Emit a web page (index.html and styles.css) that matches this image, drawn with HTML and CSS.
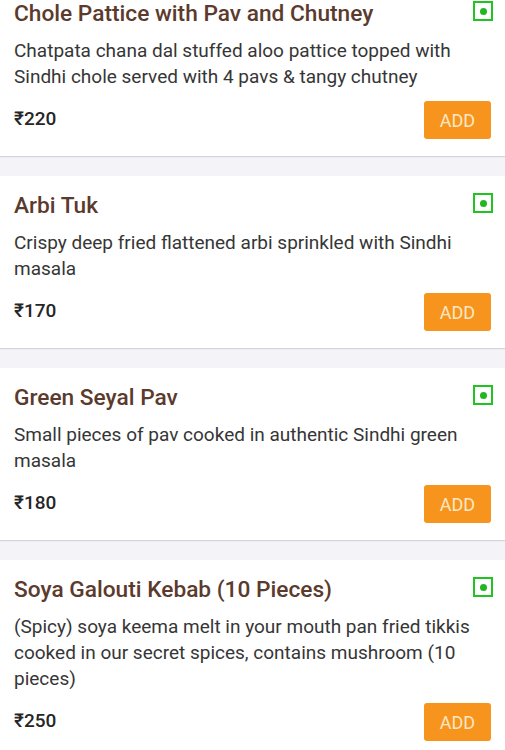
FILE: index.html
```html
<!DOCTYPE html>
<html lang="en">
<head>
<meta charset="utf-8">
<title>Menu</title>
<link rel="stylesheet" href="styles.css">
</head>
<body>
<main class="menu">
  <article class="card card--first">
    <div class="card-head">
      <h2 class="title">Chole Pattice with Pav and Chutney</h2>
      <span class="veg"><span class="veg-dot"></span></span>
    </div>
    <p class="desc">Chatpata chana dal stuffed aloo pattice topped with Sindhi chole served with 4 pavs &amp; tangy chutney</p>
    <div class="card-foot">
      <span class="price">₹220</span>
      <button class="add">ADD</button>
    </div>
  </article>
  <article class="card">
    <div class="card-head">
      <h2 class="title">Arbi Tuk</h2>
      <span class="veg"><span class="veg-dot"></span></span>
    </div>
    <p class="desc">Crispy deep fried flattened arbi sprinkled with Sindhi masala</p>
    <div class="card-foot">
      <span class="price">₹170</span>
      <button class="add">ADD</button>
    </div>
  </article>
  <article class="card">
    <div class="card-head">
      <h2 class="title">Green Seyal Pav</h2>
      <span class="veg"><span class="veg-dot"></span></span>
    </div>
    <p class="desc">Small pieces of pav cooked in authentic Sindhi green masala</p>
    <div class="card-foot">
      <span class="price">₹180</span>
      <button class="add">ADD</button>
    </div>
  </article>
  <article class="card">
    <div class="card-head">
      <h2 class="title">Soya Galouti Kebab (10 Pieces)</h2>
      <span class="veg"><span class="veg-dot"></span></span>
    </div>
    <p class="desc">(Spicy) soya keema melt in your mouth pan fried tikkis cooked in our secret spices, contains mushroom (10 pieces)</p>
    <div class="card-foot">
      <span class="price">₹250</span>
      <button class="add">ADD</button>
    </div>
  </article>
</main>
</body>
</html>
```
FILE: styles.css
```css
html, body {
  margin: 0;
  padding: 0;
}
body {
  background: #f4f3f7;
  font-family: Roboto, "Noto Sans", "Liberation Sans", sans-serif;
}
.menu {
  display: flex;
  flex-direction: column;
  gap: 20px;
}
.card {
  background: #ffffff;
  padding: 16px 14px 17px 14px;
  box-shadow: 0 1px 1px rgba(0, 0, 0, 0.13);
}
.card--first {
  padding-top: 0;
}
.card-head {
  display: flex;
  justify-content: space-between;
  align-items: flex-start;
  gap: 12px;
}
.title {
  margin: 0;
  font-size: 22.7px;
  line-height: 28px;
  font-weight: 500;
  color: #5b3b2d;
}
.veg {
  flex: none;
  width: 20px;
  height: 20px;
  box-sizing: border-box;
  border: 2px solid #20c420;
  margin-top: 1px;
  margin-right: -2px;
  display: flex;
  align-items: center;
  justify-content: center;
}
.veg-dot {
  width: 7px;
  height: 7px;
  border-radius: 50%;
  background: #1fb81f;
}
.desc {
  margin: 10px 0 0 0;
  font-size: 19px;
  line-height: 26px;
  color: #363636;
}
.card-foot {
  margin-top: 11px;
  display: flex;
  justify-content: space-between;
  align-items: center;
}
.price {
  font-size: 19px;
  font-weight: 500;
  color: #262626;
  margin-top: -3px;
}
.add {
  width: 67px;
  height: 38px;
  border: none;
  border-radius: 3px;
  background: #f7941d;
  color: #fde7c4;
  font-family: Roboto, "Noto Sans", "Liberation Sans", sans-serif;
  font-size: 18px;
  padding: 0;
}
```
